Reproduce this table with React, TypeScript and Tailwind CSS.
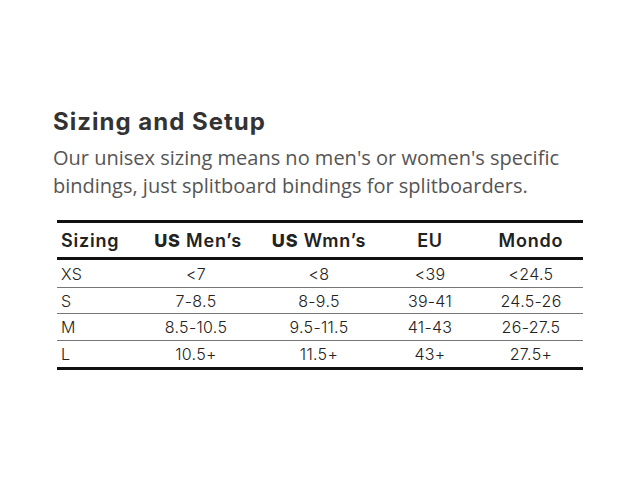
import * as React from "react";

const rows = [
  ["XS", "<7", "<8", "<39", "<24.5"],
  ["S", "7-8.5", "8-9.5", "39-41", "24.5-26"],
  ["M", "8.5-10.5", "9.5-11.5", "41-43", "26-27.5"],
  ["L", "10.5+", "11.5+", "43+", "27.5+"],
];

// row heights include the 1px rule underneath
const heights = ["h-[28px]", "h-[26px]", "h-[27px]", "h-[26px]"];

const cols = "grid grid-cols-[78px_122px_124px_98px_104px]";

export default function App() {
  return (
    <div className="min-h-screen w-[640px] bg-white pl-[53px] pt-[106px]">
      <h2 className="font-['Inter',sans-serif] text-[24px] font-bold leading-[32px] tracking-[1px] text-[#333]">
        Sizing and Setup
      </h2>
      <p className="mt-[6px] w-[540px] font-['Open_Sans',sans-serif] text-[20px] leading-[28px] text-[#555]">
        Our unisex sizing means no men's or women's specific bindings, just
        splitboard bindings for splitboarders.
      </p>

      <div className="ml-[4px] mt-[20px] w-[526px] border-y-[3px] border-[#111] font-['Inter',sans-serif] text-[#222]">
        <div
          className={`${cols} h-[37px] items-center border-b-[3px] border-[#111] text-[18px] font-semibold tracking-[0.8px]`}
        >
          <span className="pl-[4px]">Sizing</span>
          <span className="pl-[4px] text-center">
            <b className="font-extrabold">US</b> Men’s
          </span>
          <span className="text-center">
            <b className="font-extrabold">US</b> Wmn’s
          </span>
          <span className="text-center">EU</span>
          <span className="text-center">Mondo</span>
        </div>
        {rows.map((r, i) => (
          <div
            key={r[0]}
            className={`${cols} ${heights[i]} items-center text-[16px] font-light tracking-[0.3px] ${
              i < rows.length - 1 ? "border-b border-[#777]" : ""
            }`}
          >
            <span className="pl-[4px]">{r[0]}</span>
            <span className="text-center">{r[1]}</span>
            <span className="text-center">{r[2]}</span>
            <span className="text-center">{r[3]}</span>
            <span className="text-center">{r[4]}</span>
          </div>
        ))}
      </div>
    </div>
  );
}
